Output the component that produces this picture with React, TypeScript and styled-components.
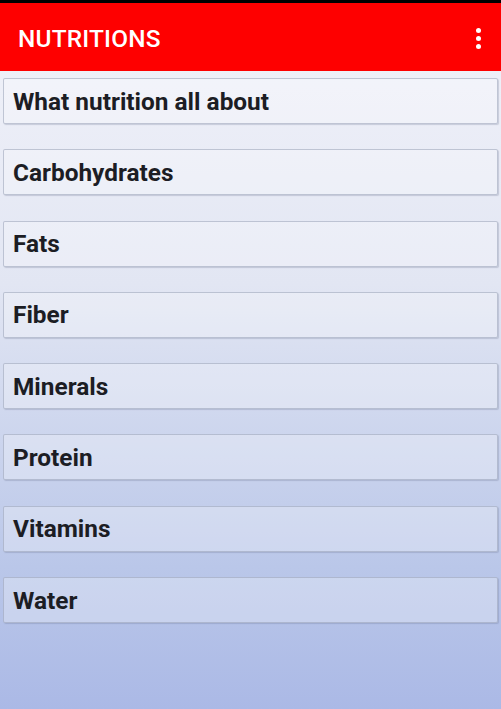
import React from "react";
import styled, { createGlobalStyle } from "styled-components";

const Global = createGlobalStyle`
  html, body { margin: 0; padding: 0; }
  body { font-family: Roboto, "Noto Sans", sans-serif; }
`;

const Screen = styled.div`
  width: 501px;
  height: 709px;
  display: flex;
  flex-direction: column;
  background: linear-gradient(180deg, #f2f3fa 0%, #e2e6f3 40%, #bac7e9 80%, #abb9e6 100%);
  overflow: hidden;
`;

const StatusStrip = styled.div`
  height: 3px;
  background: #000;
`;

const AppBar = styled.div`
  height: 68px;
  background: #fe0000;
  display: flex;
  align-items: center;
  justify-content: space-between;
  padding: 2px 20px 0 18px;
  box-sizing: border-box;
`;

const Title = styled.div`
  color: #fff;
  font-family: Roboto, sans-serif;
  font-weight: 500;
  font-size: 24.4px;
  letter-spacing: 0.2px;
`;

const MenuDots = styled.div`
  display: flex;
  flex-direction: column;
  gap: 3px;
`;

const Dot = styled.span`
  width: 5px;
  height: 5px;
  border-radius: 50%;
  background: #fff;
`;

const List = styled.div`
  display: flex;
  flex-direction: column;
  gap: 25.3px;
  padding: 7px 3px 0 3px;
`;

const Item = styled.div`
  height: 46px;
  box-sizing: border-box;
  border: 1.5px solid rgba(150, 158, 180, 0.55);
  border-radius: 2px;
  background: rgba(255, 255, 255, 0.28);
  box-shadow: 1px 1px 1px rgba(90, 100, 130, 0.25);
  display: flex;
  align-items: center;
  padding-left: 9px;
  font-family: Roboto, sans-serif;
  font-weight: 700;
  font-size: 24.4px;
  color: #1c1d24;
`;

const items = [
  "What nutrition all about",
  "Carbohydrates",
  "Fats",
  "Fiber",
  "Minerals",
  "Protein",
  "Vitamins",
  "Water",
];

export default function App() {
  return (
    <>
      <Global />
      <Screen>
        <StatusStrip />
        <AppBar>
          <Title>NUTRITIONS</Title>
          <MenuDots>
            <Dot />
            <Dot />
            <Dot />
          </MenuDots>
        </AppBar>
        <List>
          {items.map((t) => (
            <Item key={t}>{t}</Item>
          ))}
        </List>
      </Screen>
    </>
  );
}
